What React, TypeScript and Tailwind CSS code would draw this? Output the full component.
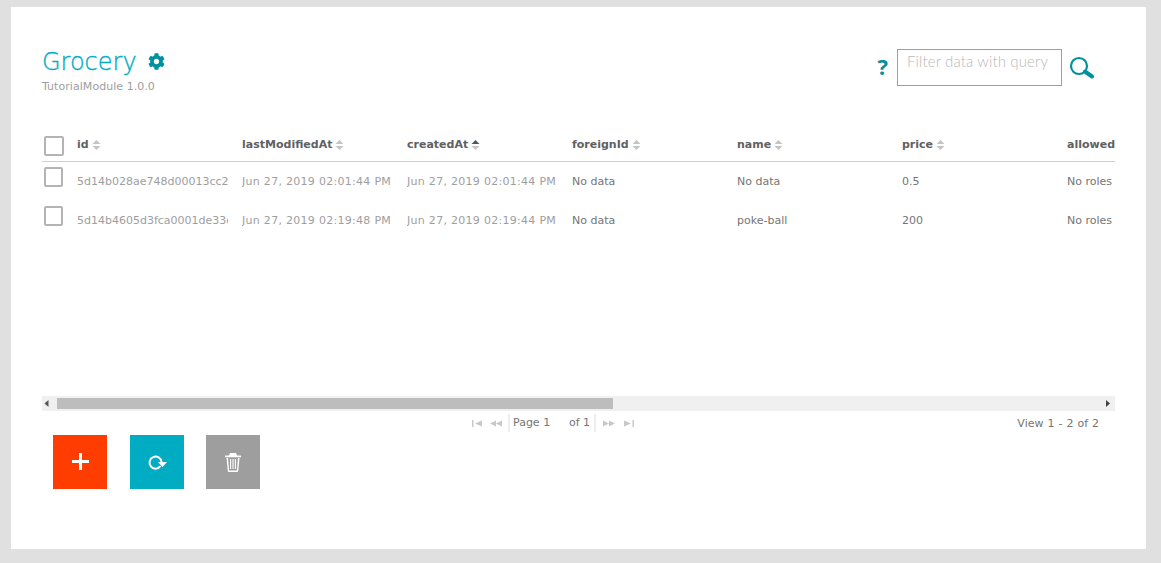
import React from "react";
import { FaCog } from "react-icons/fa";

const cols = ["lastModifiedAt", "createdAt", "foreignId", "name", "price", "allowed"];
const rows = [
  ["5d14b028ae748d00013cc2", "Jun 27, 2019 02:01:44 PM", "Jun 27, 2019 02:01:44 PM", "No data", "No data", "0.5", "No roles"],
  ["5d14b4605d3fca0001de33e", "Jun 27, 2019 02:19:48 PM", "Jun 27, 2019 02:19:44 PM", "No data", "poke-ball", "200", "No roles"],
];

function Sort({ active }: { active?: boolean }) {
  return (
    <svg width="9" height="10" viewBox="0 0 9 10" className="ml-[3px] shrink-0">
      <path d="M4.5 0 L8.5 4 H0.5 Z" fill={active ? "#555555" : "#c4c4c4"} />
      <path d="M0.5 6 H8.5 L4.5 10 Z" fill="#c4c4c4" />
    </svg>
  );
}

function Box({ cls }: { cls: string }) {
  return <div className={"border-2 border-[#b4b4b4] rounded-[2px] bg-white " + cls} />;
}

function Pager({ w, d }: { w: number; d: string }) {
  return (
    <svg width={w} height="7" viewBox={`0 0 ${w} 7`} className="shrink-0">
      <path d={d} fill="#c8c8c8" />
    </svg>
  );
}

export default function App() {
  return (
    <div className="h-[563px] w-[1161px] bg-[#e0e0e0] pt-[7px] pl-[11px] font-['DejaVu_Sans',sans-serif] overflow-hidden">
      <div className="w-[1135px] h-[542px] bg-white pl-[31px] pr-[31px]">
        <div className="flex justify-between h-[121px]">
          <div className="pt-[38px]">
            <div className="flex items-center h-[34px]">
              <span className="text-[24px] leading-[34px] text-[#00acc1] font-extralight [-webkit-text-stroke:0.35px_#00acc1]">Grocery</span>
              <FaCog className="ml-[11px] text-[#00919f] -mt-[1px]" size={17} />
            </div>
            <div className="text-[11px] leading-[14px] text-[#9e9e9e] mt-[1px] tracking-[0.05px]">TutorialModule 1.0.0</div>
          </div>
          <div className="flex pt-[42px] pr-[20px]">
            <span className="text-[#00919f] text-[22px] font-bold leading-[24px] mt-[5px] mr-[9px] font-['Open_Sans',sans-serif]">?</span>
            <div className="w-[165px] h-[37px] border border-[#9e9e9e] pl-[9px] pt-[1px] text-[15px] tracking-[0.14px] leading-[20px] text-[#b8b8b8] font-light font-['Lato',sans-serif] whitespace-nowrap">
              Filter data with query
            </div>
            <svg width="26" height="24" viewBox="0 0 26 24" className="ml-[7px] mt-[7px]">
              <circle cx="10" cy="10" r="8" fill="none" stroke="#00919f" strokeWidth="2.2" />
              <path d="M16 15.5 L23 20.5" stroke="#00919f" strokeWidth="4" strokeLinecap="round" />
            </svg>
          </div>
        </div>

        <div className="w-[1073px]">
          <div className="flex h-[34px] border-b border-[#cfcfcf] overflow-hidden">
            <div className="w-[35px] shrink-0 pl-[2px] pt-[8px]">
              <Box cls="w-[20px] h-[20px]" />
            </div>
            <div className="w-[165px] shrink-0 flex items-center h-[33px] pt-[1px] text-[11px] font-bold text-[#616161]">
              id
              <Sort />
            </div>
            {cols.map((c) => (
              <div key={c} className="w-[165px] shrink-0 flex items-center h-[33px] pt-[1px] text-[11px] font-bold text-[#616161]">
                {c}
                {c !== "allowed" && <Sort active={c === "createdAt"} />}
              </div>
            ))}
          </div>
          {rows.map((r, i) => (
            <div key={i} className="flex h-[39px] overflow-hidden text-[11px]">
              <div className="w-[35px] shrink-0 pl-[2px] pt-[5px]">
                <Box cls="w-[19px] h-[20px]" />
              </div>
              {r.map((v, j) => (
                <div key={j} className="w-[165px] shrink-0 pr-[14px] pt-[12px] leading-[16px]">
                  <div
                    className={
                      "overflow-hidden whitespace-nowrap " +
                      (j === 1 || j === 2 ? "tracking-[0.29px] " : "") +
                      (j < 3 ? "text-[#9e9e9e]" : "text-[#757575]")
                    }
                  >
                    {v}
                  </div>
                </div>
              ))}
            </div>
          ))}
          <div className="mt-[156px] h-[15px] bg-[#f0f0f0] flex items-center justify-between">
            <div className="flex items-center h-[11px]">
              <svg width="15" height="11" viewBox="0 0 15 11" className="shrink-0">
                <path d="M6.5 2 V9 L2.5 5.5 Z" fill="#555555" />
              </svg>
              <div className="w-[556px] h-[11px] bg-[#bdbdbd]" />
            </div>
            <svg width="15" height="11" viewBox="0 0 15 11" className="shrink-0">
              <path d="M6 2 V9 L10 5.5 Z" fill="#444444" />
            </svg>
          </div>
          <div className="relative flex items-center justify-end h-[24px] pt-[2px] text-[11px] text-[#757575] pr-[16px]">
            <span className="[word-spacing:0.5px]">View 1 - 2 of 2</span>
            <div className="absolute left-[430px] top-[3px] h-[18px] flex items-center">
              <Pager w={10} d="M0 0 H1.5 V7 H0 Z M10 0.5 V6.5 L3 3.5 Z" />
              <span className="w-[8px]" />
              <Pager w={12} d="M6 0.5 V6.5 L0 3.5 Z M12 0.5 V6.5 L6 3.5 Z" />
              <div className="ml-[6px] h-[18px] w-[2px] bg-[#eeeeee]" />
              <span className="ml-[3px] w-[56px] whitespace-nowrap">Page 1</span>
              <span className="w-[25px] whitespace-nowrap">of 1</span>
              <div className="h-[18px] w-[2px] bg-[#eeeeee]" />
              <span className="w-[7px]" />
              <Pager w={12} d="M0 0.5 V6.5 L6 3.5 Z M6 0.5 V6.5 L12 3.5 Z" />
              <span className="w-[9px]" />
              <Pager w={10} d="M0 0.5 V6.5 L7 3.5 Z M8.5 0 H10 V7 H8.5 Z" />
            </div>
          </div>
          <div className="flex pl-[11px]">
            <div className="w-[54px] h-[54px] bg-[#ff3d00] flex items-center justify-center">
              <svg width="17" height="17" viewBox="0 0 17 17" className="mt-[-1px]">
                <path d="M7 0 H10 V7 H17 V10 H10 V17 H7 V10 H0 V7 H7 Z" fill="#fff" />
              </svg>
            </div>
            <div className="ml-[23px] w-[54px] h-[54px] bg-[#00acc1] flex items-center justify-center">
              <svg width="20" height="18" viewBox="0 0 20 18">
                <path d="M14.5 9 A6 6 0 1 0 13.5 13" fill="none" stroke="#fff" strokeWidth="2" />
                <path d="M11 9 H20 L15.5 14 Z" fill="#fff" />
              </svg>
            </div>
            <div className="ml-[22px] w-[54px] h-[54px] bg-[#9e9e9e] flex items-center justify-center">
              <svg width="18" height="21" viewBox="0 0 18 21">
                <path d="M1 3.5 H17 V5.2 H1 Z M6 1 H12 L13 3.5 H5 Z" fill="#fff" />
                <path d="M2.5 6 L3.8 19 Q3.9 20 5 20 H13 Q14.1 20 14.2 19 L15.5 6 H14 L12.9 18.4 H5.1 L4 6 Z" fill="#fff" />
                <path d="M6.6 7 V17 M9 7 V17 M11.4 7 V17" stroke="#fff" strokeWidth="1.1" />
              </svg>
            </div>
          </div>
        </div>
      </div>
    </div>
  );
}
